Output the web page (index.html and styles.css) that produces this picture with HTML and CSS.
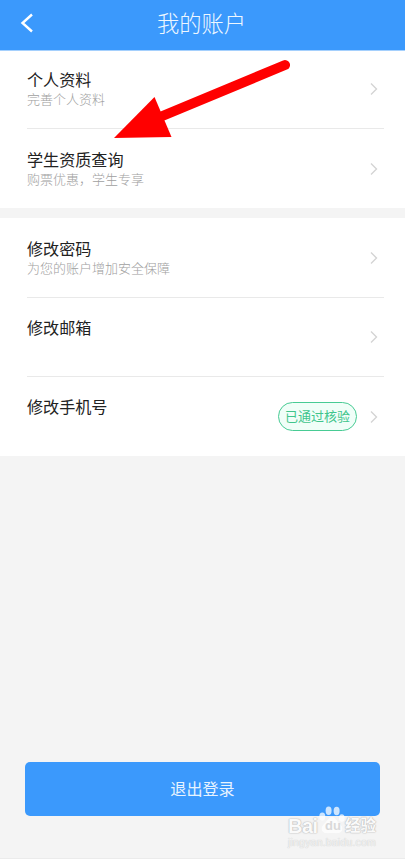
FILE: index.html
```html
<!DOCTYPE html>
<html lang="zh-CN">
<head>
    <meta charset="UTF-8">
    <meta name="viewport" content="width=device-width, initial-scale=1.0">
    <title>我的账户</title>
    <link rel="stylesheet" href="styles.css">
</head>
<body>
    <div class="page">
        <header class="header">
            <svg class="back" width="14" height="20" viewBox="0 0 14 20"><path d="M13 1.500L3.500 10l9.500 8.500"/></svg>
            <h1>我的账户</h1>
        </header>

        <div class="list">
            <div class="row">
                <div class="info info-up">
                    <div class="name">个人资料</div>
                    <div class="desc">完善个人资料</div>
                </div>
                <svg class="chevron" width="8" height="14" viewBox="0 0 8 14"><path d="M1 1.500L6.500 7 1 12.500"/></svg>
            </div>
            <div class="row">
                <div class="info">
                    <div class="name">学生资质查询</div>
                    <div class="desc">购票优惠，学生专享</div>
                </div>
                <svg class="chevron" width="8" height="14" viewBox="0 0 8 14"><path d="M1 1.500L6.500 7 1 12.500"/></svg>
            </div>
        </div>

        <div class="list list-security">
            <div class="row">
                <div class="info">
                    <div class="name">修改密码</div>
                    <div class="desc">为您的账户增加安全保障</div>
                </div>
                <svg class="chevron" width="8" height="14" viewBox="0 0 8 14"><path d="M1 1.500L6.500 7 1 12.500"/></svg>
            </div>
            <div class="row">
                <div class="info info-up">
                    <div class="name">修改邮箱</div>
                </div>
                <svg class="chevron" width="8" height="14" viewBox="0 0 8 14"><path d="M1 1.500L6.500 7 1 12.500"/></svg>
            </div>
            <div class="row">
                <div class="info info-up">
                    <div class="name">修改手机号</div>
                </div>
                <span class="badge">已通过核验</span>
                <svg class="chevron" width="8" height="14" viewBox="0 0 8 14"><path d="M1 1.500L6.500 7 1 12.500"/></svg>
            </div>
        </div>

        <div class="footer">
            <button type="button" class="logout">退出登录</button>
        </div>

        <!-- red pointer over the list -->
        <svg class="arrow" width="180" height="84" viewBox="0 0 180 84">
            <line x1="50" y1="61" x2="175" y2="9"/>
            <polygon points="4,82 44.5,41 61.5,81"/>
        </svg>

        <div class="watermark">
            <div class="brand">
                <span class="bai">Bai</span>
                <span class="paw">
                    <svg width="26" height="28" viewBox="0 0 26 28">
                        <ellipse cx="3.3" cy="10.5" rx="3" ry="4"/>
                        <ellipse cx="9.6" cy="4.7" rx="3" ry="4.2"/>
                        <ellipse cx="17.6" cy="5" rx="3" ry="4.2"/>
                        <ellipse cx="22.8" cy="12" rx="2.9" ry="3.8"/>
                        <path d="M13 11c-3 0-4 3-7 6-3 2.500-4 5-3 7.500C4.500 28 9 27 13 27s8.500 1 10-2.500c1-2.500 0-5-3-7.500-3-3-4-6-7-6z"/>
                    </svg>
                    <span class="du">du</span>
                </span>
                <span class="cn">经验</span>
            </div>
            <div class="site">jingyan.baidu.com</div>
        </div>
    </div>
</body>
</html>
```
FILE: styles.css
```css
* {
    box-sizing: border-box;
    margin: 0;
    padding: 0;
}
body {
    font-family: 'Noto Sans CJK SC', sans-serif;
    background: #f4f4f4;
}
.page {
    position: relative;
    height: 859px;
    display: flex;
    flex-direction: column;
    border-bottom: 1px solid #ebebeb;
    overflow: hidden;
}
.header {
    position: relative;
    z-index: 1;
    height: 51px;
    display: grid;
    grid-template-columns: 60px 1fr 60px;
    align-items: center;
    background: #3b99fc;
    border-bottom: 1px solid #a5d0fd;
    padding-bottom: 4px;
}
.header h1 {
    grid-column: 2;
    padding-bottom: 3px;
    font-size: 22.3px;
    line-height: 32px;
    font-weight: 300;
    text-align: center;
    text-indent: -2px;
    color: #eef7ff;
}
.back {
    margin-left: 19px;
}
.back path {
    fill: none;
    stroke: #fff;
    stroke-width: 2.4;
}
.list {
    margin-top: -1px;
    background: #fff;
}
.list-security {
    margin-top: 10px;
}
.row {
    display: flex;
    align-items: center;
    height: 79px;
    margin-left: 27px;
    margin-right: 21px;
    padding-right: 6px;
    border-bottom: 1px solid #e9e9e9;
}
.list-security .row:first-child {
    height: 80px;
}
.row:last-child {
    border-bottom: none;
}
.info {
    flex: 1;
    align-self: flex-start;
    padding-top: 18px;
}
.info-up {
    padding-top: 17px;
}
.name {
    font-size: 16.1px;
    line-height: 24px;
    color: #222;
}
.desc {
    margin-top: -1px;
    font-size: 13px;
    line-height: 18px;
    font-weight: 300;
    color: #a0a0a0;
}
.chevron path {
    fill: none;
    stroke: #d4d4d4;
    stroke-width: 1.4;
}
.badge {
    width: 79px;
    height: 29px;
    margin-right: 13px;
    border: 1.5px solid #48cb94;
    border-radius: 15px;
    background: #f0fef8;
    color: #40c58c;
    font-size: 13px;
    line-height: 25px;
    text-align: center;
}
.footer {
    margin-top: auto;
    padding: 0 25px 42px;
}
.logout {
    display: block;
    width: 100%;
    height: 54px;
    padding-bottom: 2px;
    border: none;
    border-radius: 5px;
    background: #3b99fc;
    color: #e7f3ff;
    font-family: inherit;
    font-size: 16.1px;
}
.arrow {
    position: absolute;
    left: 110px;
    top: 56px;
    z-index: 2;
}
.arrow line {
    stroke: #f00;
    stroke-width: 10;
    stroke-linecap: round;
}
.arrow polygon {
    fill: #f00;
}
.watermark {
    position: absolute;
    left: 288px;
    top: 806px;
    width: 90px;
    font-family: 'Liberation Sans', 'Noto Sans CJK SC', sans-serif;
    font-weight: bold;
    color: #fafafa;
    text-shadow: 0 0 1px #bbb, 0 0 1px #bbb, 0 0 2px #ccc;
}
.brand {
    display: flex;
    height: 28px;
}
.bai {
    width: 31px;
    padding-top: 9px;
    font-size: 20px;
    line-height: 22px;
    letter-spacing: -0.5px;
}
.paw {
    position: relative;
    width: 26px;
}
.paw svg {
    display: block;
    fill: #fff;
    fill-opacity: 0.75;
}
.du {
    position: absolute;
    left: 6px;
    top: 13px;
    font-size: 13px;
    line-height: 14px;
    color: #d9d9d9;
    text-shadow: none;
}
.cn {
    padding-top: 9px;
    font-size: 15.5px;
    line-height: 22px;
}
.site {
    padding-top: 2px;
    font-size: 10.5px;
    line-height: 12px;
    font-weight: normal;
    letter-spacing: 0.2px;
    color: #f2f2f2;
    text-shadow: 0 0 1px #ccc, 0 0 1px #ddd;
}
```
